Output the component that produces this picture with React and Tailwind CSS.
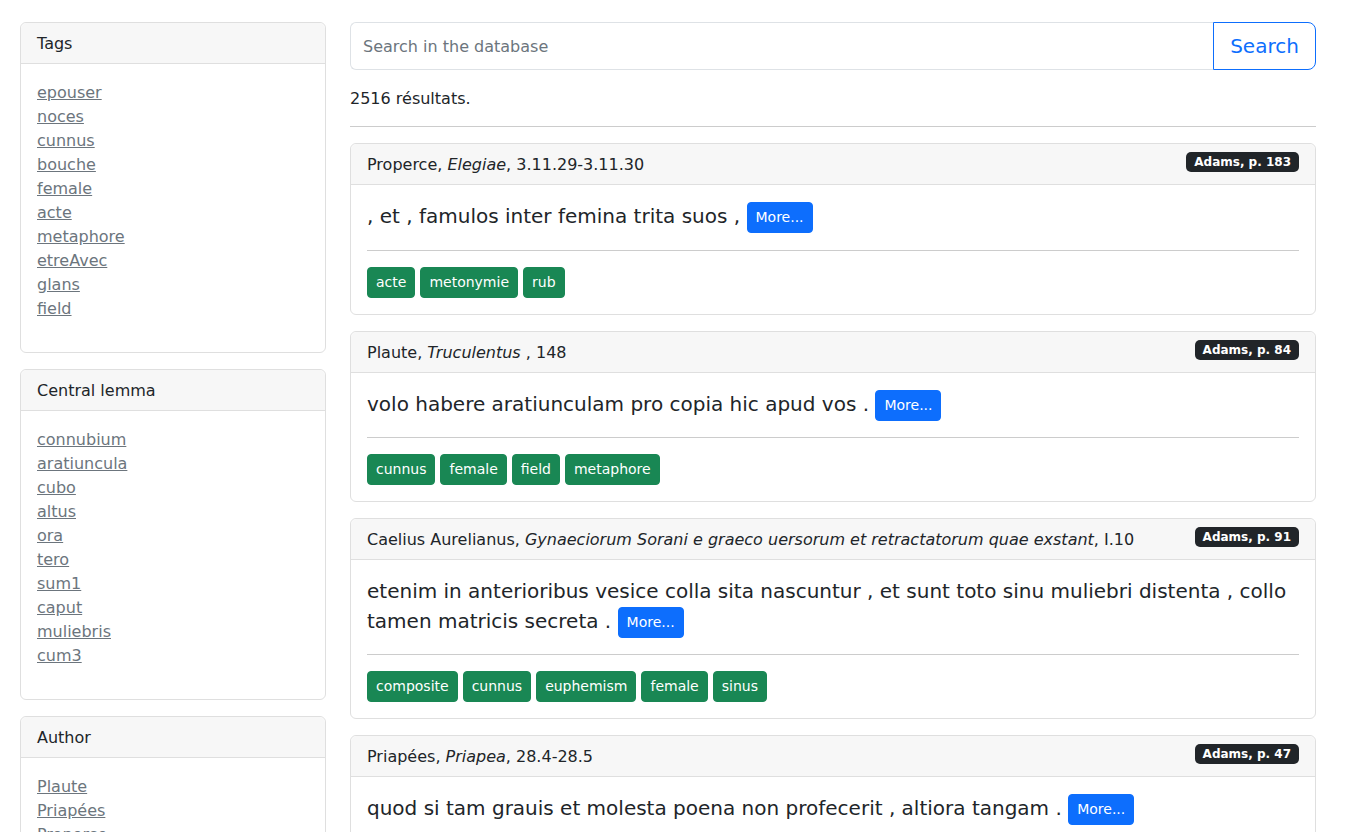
import React from "react";

const sidebar = [
  {
    title: "Tags",
    items: ["epouser", "noces", "cunnus", "bouche", "female", "acte", "metaphore", "etreAvec", "glans", "field"],
  },
  {
    title: "Central lemma",
    items: ["connubium", "aratiuncula", "cubo", "altus", "ora", "tero", "sum1", "caput", "muliebris", "cum3"],
  },
  {
    title: "Author",
    items: ["Plaute", "Priapées", "Properce", "Caelius Aurelianus", "Martial", "Catulle", "Juvénal", "Ovide", "Pétrone", "Horace"],
  },
];

const results = [
  {
    author: "Properce",
    work: "Elegiae",
    ref: ", 3.11.29-3.11.30",
    badge: "Adams, p. 183",
    text: ", et , famulos inter femina trita suos ,",
    tags: ["acte", "metonymie", "rub"],
  },
  {
    author: "Plaute",
    work: "Truculentus",
    ref: " , 148",
    badge: "Adams, p. 84",
    text: "volo habere aratiunculam pro copia hic apud vos .",
    tags: ["cunnus", "female", "field", "metaphore"],
  },
  {
    author: "Caelius Aurelianus",
    work: "Gynaeciorum Sorani e graeco uersorum et retractatorum quae exstant",
    ref: ", I.10",
    badge: "Adams, p. 91",
    text: "etenim in anterioribus vesice colla sita nascuntur , et sunt toto sinu muliebri distenta , collo tamen matricis secreta .",
    tags: ["composite", "cunnus", "euphemism", "female", "sinus"],
  },
  {
    author: "Priapées",
    work: "Priapea",
    ref: ", 28.4-28.5",
    badge: "Adams, p. 47",
    text: "quod si tam grauis et molesta poena non profecerit , altiora tangam .",
    tags: ["acte", "metaphore", "tango"],
  },
];

function SideCard({ title, items }) {
  return (
    <div className="mb-4 border border-[#dfdfdf] rounded-[6px] bg-white">
      <div className="px-4 pt-[9px] pb-[7px] leading-6 bg-[#f7f7f7] border-b border-[#dfdfdf] rounded-t-[6px] text-[#212529]">
        {title}
      </div>
      <div className="px-4 pt-[17px] pb-[15px]">
        <ul className="mb-4">
          {items.map((it) => (
            <li key={it} className="leading-6">
              <a href="#" className="text-[#6c757d] underline">
                {it}
              </a>
            </li>
          ))}
        </ul>
      </div>
    </div>
  );
}

function ResultCard({ r, first }) {
  return (
    <div className="mb-4 border border-[#dfdfdf] rounded-[6px] bg-white">
      <div className="flex items-start justify-between px-4 pt-[9px] pb-[7px] leading-6 bg-[#f7f7f7] border-b border-[#dfdfdf] rounded-t-[6px] text-[#212529]">
        <span>
          {r.author}, <i>{r.work}</i>
          {r.ref}
        </span>
        <span className="mt-[-1px] bg-[#212529] text-white text-[12px] font-bold leading-none px-[8px] py-[4px] rounded-[5px] whitespace-nowrap">
          {r.badge}
        </span>
      </div>
      <div className="p-4">
        <p className={`text-[20px] leading-[30px] text-[#212529] ${first ? "mb-[17px]" : "mb-4"}`}>
          {r.text}{" "}
          <button className="bg-[#0d6efd] text-white text-[14px] leading-[21px] px-2 py-1 border border-[#0d6efd] rounded-[4px] align-middle">
            More...
          </button>
        </p>
        <hr className="border-t border-[#cccccc] mb-4" />
        <div className="flex flex-wrap gap-[5px]">
          {r.tags.map((t) => (
            <span
              key={t}
              className="bg-[#198754] text-white text-[14px] leading-[21px] px-2 py-1 border border-[#198754] rounded-[4px]"
            >
              {t}
            </span>
          ))}
        </div>
      </div>
    </div>
  );
}

export default function App() {
  return (
    <div className="min-h-screen bg-white font-['DejaVu_Sans',sans-serif] text-[16px] text-[#212529] pt-[22px] pl-[20px] pr-[42px]">
      <div className="flex gap-6 items-start">
        <aside className="w-[306px] shrink-0">
          {sidebar.map((s) => (
            <SideCard key={s.title} title={s.title} items={s.items} />
          ))}
        </aside>
        <main className="flex-1 min-w-0">
          <div className="flex h-[48px]">
            <input
              className="flex-1 min-w-0 border border-[#dee2e6] border-r-0 rounded-l-[6px] px-3 pt-[2px] text-[16px] placeholder:text-[#6c757d] outline-none"
              placeholder="Search in the database"
            />
            <button className="w-[103px] border border-[#0d6efd] text-[#0d6efd] text-[20px] rounded-r-[8px] bg-white">
              Search
            </button>
          </div>
          <p className="mt-[17px] mb-[15px] leading-6">2516 résultats.</p>
          <hr className="mb-4 border-t border-[#cccccc]" />
          {results.map((r, i) => (
            <ResultCard key={r.author} r={r} first={i === 0} />
          ))}
        </main>
      </div>
    </div>
  );
}
